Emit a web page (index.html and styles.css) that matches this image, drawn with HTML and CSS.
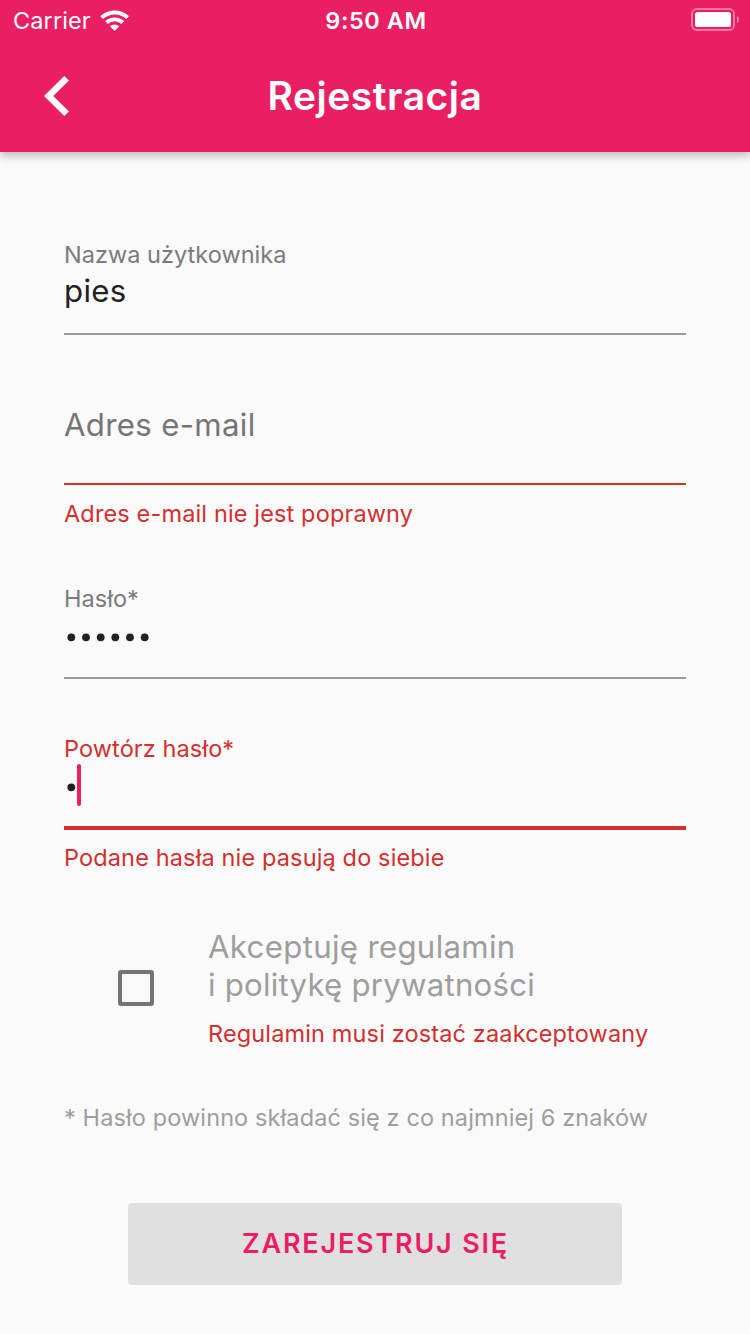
FILE: index.html
```
<!DOCTYPE html>
<html lang="pl">
<head>
<meta charset="utf-8">
<title>Rejestracja</title>
<link rel="stylesheet" href="styles.css">
</head>
<body>
<div class="screen">
  <header class="header">
    <div class="status">
      <div class="network">
        <span class="carrier">Carrier</span>
        <svg class="wifi" width="30" height="23" viewBox="0 0 30 23">
          <path d="M0.2 7.2A21 21 0 0 1 29.1 7.2L26.2 10.1A17 17 0 0 0 3.1 10.1Z"/>
          <path d="M5.1 12.2A14 14 0 0 1 24.2 12.2L21.4 15A9.8 9.8 0 0 0 7.9 15Z"/>
          <path d="M10 17.2A6.9 6.9 0 0 1 19.3 17.2L14.65 22Z"/>
        </svg>
      </div>
      <span class="clock">9:50 AM</span>
      <svg class="battery" width="48" height="24" viewBox="0 0 48 24">
        <rect class="shell" x="1" y="1" width="42" height="21" rx="5"/>
        <rect x="4" y="4" width="36" height="15" rx="2.6"/>
        <path class="tip" d="M46 8Q48 9 48 11.5Q48 14 46 15Z"/>
      </svg>
    </div>
    <div class="appbar">
      <svg class="back" width="25" height="40" viewBox="0 0 25 40">
        <path d="M20.2 0L25 4.6L9.3 20L25 35.4L20.2 40L0 20Z"/>
      </svg>
      <h1 class="title">Rejestracja</h1>
    </div>
  </header>
  <main class="form">
    <div class="field username">
      <label class="label">Nazwa użytkownika</label>
      <div class="value">pies</div>
    </div>
    <div class="field email">
      <div class="placeholder">Adres e-mail</div>
    </div>
    <p class="error email-error">Adres e-mail nie jest poprawny</p>
    <div class="field password">
      <label class="label">Hasło*</label>
      <svg class="mask" width="88" height="42" viewBox="0 0 88 42">
        <circle cx="7.3" cy="21.3" r="3.9"/>
        <circle cx="22" cy="21.3" r="3.9"/>
        <circle cx="36.7" cy="21.3" r="3.9"/>
        <circle cx="51.3" cy="21.3" r="3.9"/>
        <circle cx="66" cy="21.3" r="3.9"/>
        <circle cx="80.7" cy="21.3" r="3.9"/>
      </svg>
    </div>
    <div class="field repeat">
      <label class="label">Powtórz hasło*</label>
      <div class="entry">
        <svg class="mask" width="13" height="42" viewBox="0 0 13 42">
          <circle cx="7.3" cy="23.3" r="3.9"/>
        </svg>
        <b class="caret"></b>
      </div>
    </div>
    <p class="error repeat-error">Podane hasła nie pasują do siebie</p>
    <div class="consent">
      <span class="checkbox"></span>
      <div class="consent-text">
        <p class="terms"><span class="terms-a">Akceptuję regulamin</span><br><span class="terms-b">i politykę prywatności</span></p>
        <p class="error terms-error">Regulamin musi zostać zaakceptowany</p>
      </div>
    </div>
    <p class="note">* Hasło powinno składać się z co najmniej 6 znaków</p>
    <button class="submit">ZAREJESTRUJ SIĘ</button>
  </main>
</div>
</body>
</html>
```
FILE: styles.css
```
* { box-sizing: border-box; }
body, h1, p { margin: 0; }
body {
  background: #fafafa;
  font-family: Inter, "Noto Sans", sans-serif;
  color: #212121;
}
.screen { height: 1334px; overflow: hidden; }
.header {
  height: 152px;
  background: #e91e63;
  color: #fff;
  box-shadow: 0 4px 10px rgba(0, 0, 0, .16), 0 2px 8px rgba(0, 0, 0, .14);
}
.header svg { display: block; fill: #fff; }
.status {
  height: 40px;
  display: grid;
  grid-template-columns: 1fr auto 1fr;
  align-items: start;
  padding: 8px 11px 0 13px;
}
.network { display: flex; gap: 9px; }
.carrier, .clock { font-size: 23.5px; line-height: 25px; white-space: nowrap; }
.carrier { letter-spacing: .1px; width: 78px; }
.clock { font-weight: 560; letter-spacing: .55px; }
.wifi { margin-top: 1px; }
.battery { justify-self: end; }
.header .shell { fill: none; stroke: #fff; stroke-width: 2; opacity: .4; }
.tip { opacity: .5; }
.appbar {
  height: 112px;
  display: grid;
  grid-template-columns: 25px 1fr 25px;
  align-items: center;
  padding: 0 44px;
}
.title {
  font-size: 39px;
  line-height: 48px;
  font-weight: 560;
  text-align: center;
  letter-spacing: .5px;
}
.form { padding: 88px 64px 0; display: flex; flex-direction: column; }
.field { border-bottom: 2px solid #9a9a9a; }
.label, .error, .note {
  display: block;
  font-size: 23.5px;
  line-height: 28px;
  letter-spacing: .14px;
  white-space: nowrap;
}
.label { color: #7b7b7b; letter-spacing: .03px; }
.value, .placeholder, .terms {
  font-size: 31.2px;
  line-height: 38px;
  letter-spacing: .32px;
  white-space: nowrap;
}
.terms-b { letter-spacing: .22px; }
.placeholder { color: #757575; }
.error { color: #d32f2f; }
.username { height: 95px; padding-top: 1px; }
.username .value { margin-top: 3px; }
.email { height: 150px; padding-top: 71px; border-color: #d32f2f; }
.email-error { margin-top: 15px; }
.password { height: 151px; padding-top: 57px; }
.mask { display: block; fill: #212121; }
.password .mask { margin-top: 3px; }
.repeat { height: 151px; padding-top: 56px; border-bottom: 4px solid #d32f2f; }
.repeat .label { color: #d32f2f; letter-spacing: .1px; }
.entry { display: flex; margin-top: 1px; }
.caret { width: 4px; height: 42px; border-radius: 2px; background: #e91e63; }
.repeat-error { margin-top: 14px; }
.consent { display: flex; margin-top: 56px; padding-left: 54px; }
.checkbox {
  width: 36px;
  height: 36px;
  margin: 42px 54px 0 0;
  border: 4px solid #757575;
  border-radius: 3px;
}
.terms { color: #9e9e9e; }
.terms-error { margin-top: 16px; }
.note { margin-top: 56px; color: #9e9e9e; letter-spacing: .11px; }
.submit {
  width: 494px;
  height: 82px;
  margin: 71px auto 0;
  padding: 0;
  border: 0;
  border-radius: 4px;
  background: #e0e0e0;
  color: #e91e63;
  font: 560 27px/40px Inter, sans-serif;
  letter-spacing: 1.8px;
  text-indent: 1px;
}
```
